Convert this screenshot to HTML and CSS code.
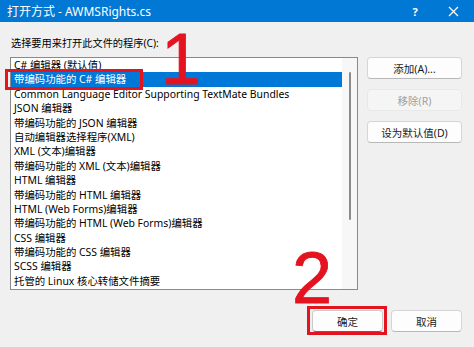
FILE: index.html
```html
<!DOCTYPE html>
<html lang="zh-CN">
<head>
<meta charset="utf-8">
<link rel="stylesheet" href="styles.css">
</head>
<body>
<div class="window">
  <div class="titlebar">
    <span class="title">打开方式 - AWMSRights.cs</span>
    <span class="help">?</span>
    <span class="close">
      <svg width="11" height="11" viewBox="0 0 11 11"><path d="M1 1L10 10M10 1L1 10" stroke="#fff" stroke-width="1.2" fill="none"/></svg>
    </span>
  </div>
  <div class="main">
    <div class="left">
      <div class="label">选择要用来打开此文件的程序(C):</div>
      <div class="list">
        <ul class="items">
          <li>C# 编辑器 (默认值)</li>
          <li class="selected">带编码功能的 C# 编辑器</li>
          <li>Common Language Editor Supporting TextMate Bundles</li>
          <li>JSON 编辑器</li>
          <li>带编码功能的 JSON 编辑器</li>
          <li>自动编辑器选择程序(XML)</li>
          <li>XML (文本)编辑器</li>
          <li>带编码功能的 XML (文本)编辑器</li>
          <li>HTML 编辑器</li>
          <li>带编码功能的 HTML 编辑器</li>
          <li>HTML (Web Forms)编辑器</li>
          <li>带编码功能的 HTML (Web Forms)编辑器</li>
          <li>CSS 编辑器</li>
          <li>带编码功能的 CSS 编辑器</li>
          <li>SCSS 编辑器</li>
          <li>托管的 Linux 核心转储文件摘要</li>
        </ul>
        <div class="scrollbar"><div class="thumb"></div></div>
      </div>
    </div>
    <div class="side">
      <button class="btn">添加(A)...</button>
      <button class="btn disabled">移除(R)</button>
      <button class="btn">设为默认值(D)</button>
    </div>
  </div>
  <div class="footer">
    <button class="btn foot default">确定</button>
    <button class="btn foot">取消</button>
  </div>
  <div class="mark box1"></div>
  <div class="mark num1">1</div>
  <div class="mark box2"></div>
  <div class="mark num2">2</div>
</div>
</body>
</html>
```
FILE: styles.css
```css
* { box-sizing: border-box; }
html, body { margin: 0; padding: 0; }
body {
  width: 474px;
  height: 347px;
  overflow: hidden;
  background: #f0f0f0;
  font-family: "Noto Sans", "Noto Sans CJK SC", sans-serif;
  color: #000;
}
.window { position: relative; width: 474px; height: 347px; }
.titlebar {
  height: 22px;
  background: #0078d4;
  color: #fff;
  display: flex;
  align-items: center;
  padding-left: 7px;
  font-size: 12px;
}
.title { flex: 1; }
.help { width: 12px; font-size: 11px; font-weight: bold; margin-right: 27px; text-align: center; }
.close { width: 11px; margin-right: 15px; display: flex; }
.main {
  display: flex;
  padding: 14px 12px 0 10px;
}
.left { width: 348px; }
.label {
  font-size: 10.2px;
  line-height: 14px;
  height: 21px;
  padding-left: 1px;
}
.list {
  height: 233px;
  border: 1px solid #8a8a8a;
  background: #fff;
  display: flex;
}
.items {
  list-style: none;
  margin: 0;
  padding: 0;
  flex: 1;
  font-size: 10.4px;
}
.items li {
  height: 14.4px;
  line-height: 14.4px;
  padding-left: 3px;
  white-space: nowrap;
}
.items li.selected { background: #0078d7; color: #fff; }
.scrollbar {
  width: 15px;
  background: #f7f7f7;
  display: flex;
  justify-content: center;
  padding-top: 14px;
}
.thumb { width: 2px; height: 148px; background: #8c8c8c; border-radius: 1px; }
.side {
  display: flex;
  flex-direction: column;
  gap: 10px;
  margin-left: 9px;
  padding-top: 21px;
}
.btn {
  font-family: "Noto Sans", "Noto Sans CJK SC", sans-serif;
  font-size: 10.5px;
  width: 95px;
  height: 22px;
  padding: 0;
  background: #fdfdfd;
  border: 1px solid #d5d5d5;
  border-bottom-color: #b8b8b8;
  border-radius: 4px;
  color: #1a1a1a;
}
.btn.disabled { background: #f5f5f5; border-color: #e8e8e8; color: #a0a0a0; }
.footer {
  display: flex;
  justify-content: flex-end;
  gap: 8px;
  padding: 20px 12px 0 0;
}
.btn.foot { width: 71px; }
.btn.default { border-color: #c9c9c9; border-bottom: 1px solid #2f6fbf; }
.mark { position: absolute; }
.box1 { left: 5px; top: 69px; width: 138px; height: 21px; border: 3px solid #e3131f; }
.box2 { left: 307px; top: 306px; width: 80px; height: 29px; border: 3px solid #e3131f; }
.num1, .num2 {
  font-family: "Liberation Sans", sans-serif;
  color: #e3131f;
  font-size: 72px;
  line-height: 50px;
  -webkit-text-stroke: 0.8px #e3131f;
}
.num1 { left: 161px; top: 34px; }
.num2 { left: 292px; top: 253px; }
```
